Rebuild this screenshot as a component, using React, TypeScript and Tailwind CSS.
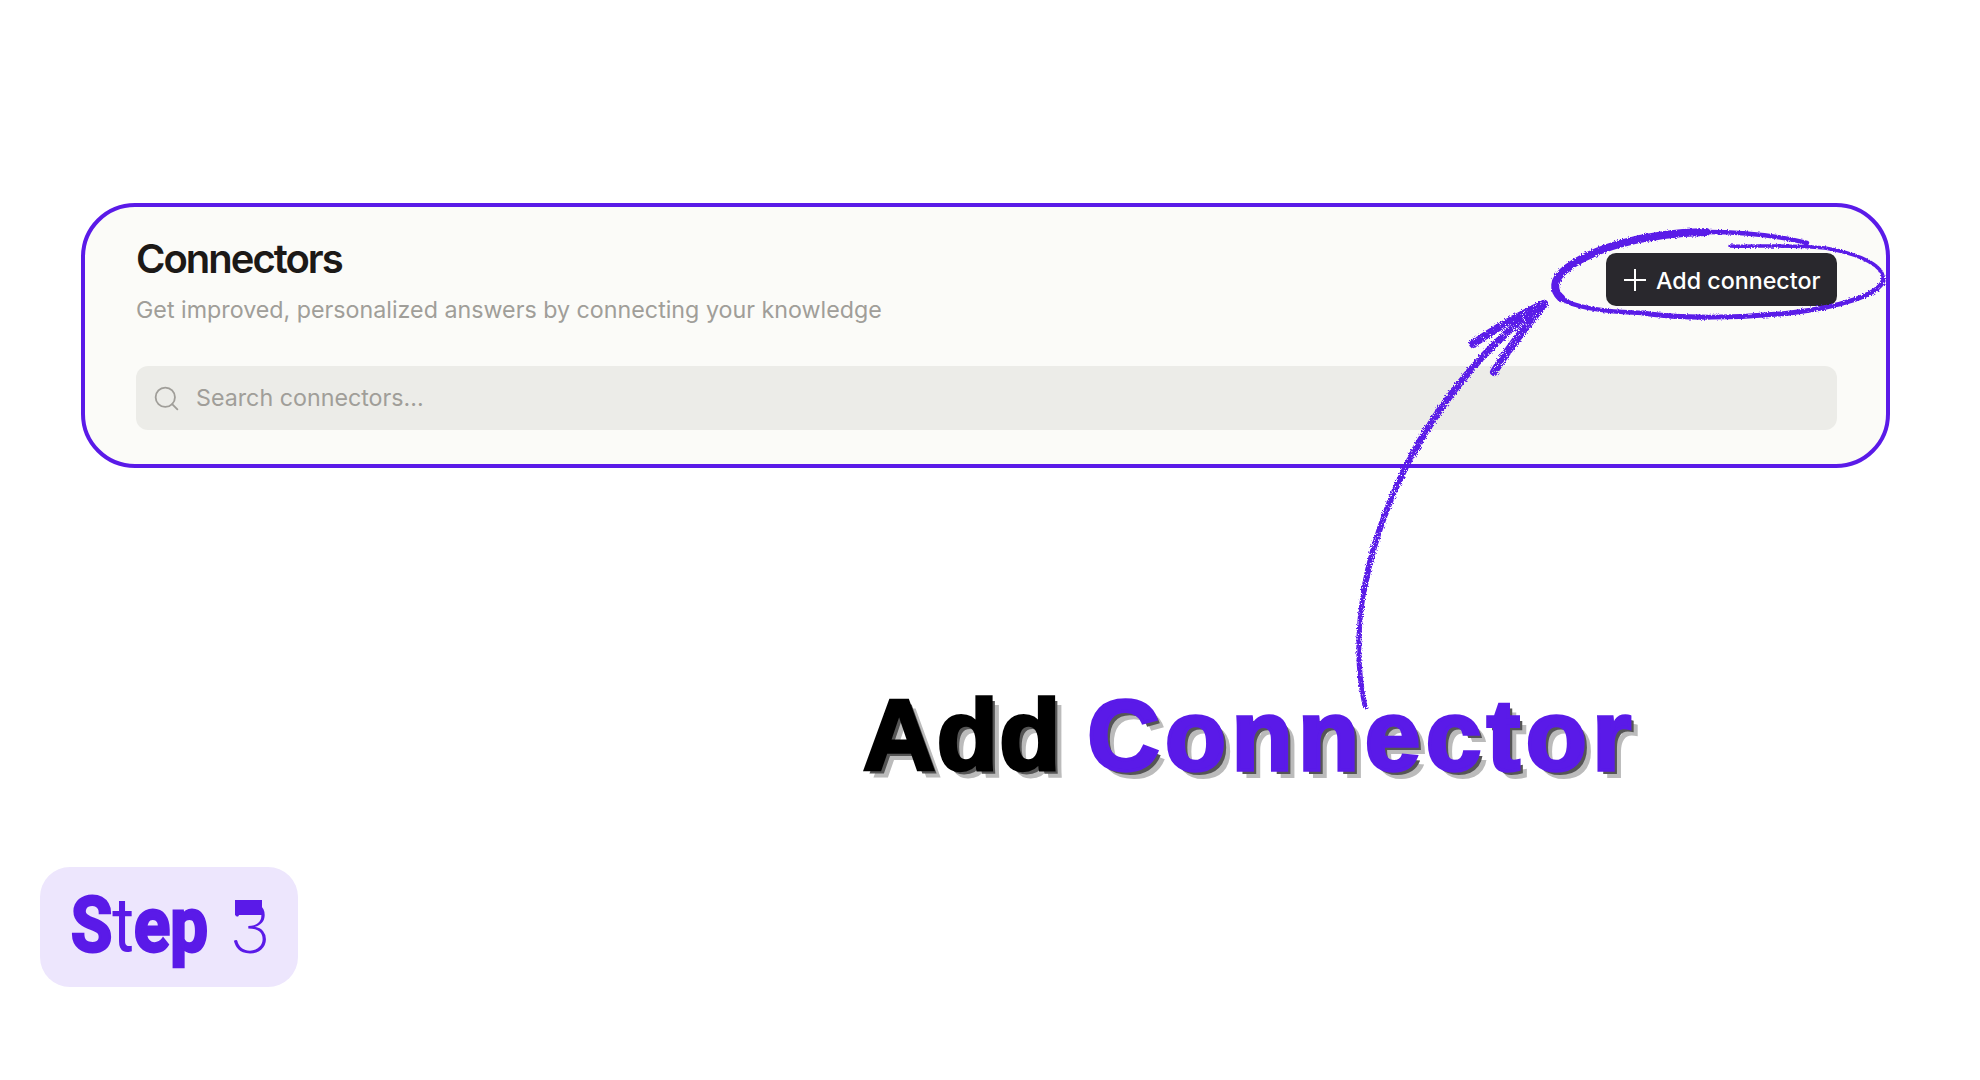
import { Search } from "lucide-react";

const inter = "font-['Inter',sans-serif]";

function Scribbles() {
    return (
        <svg className="absolute inset-0 pointer-events-none" width="1980" height="1080" viewBox="0 0 1980 1080" fill="none">
            <defs>
                <filter id="rough" x="-10%" y="-10%" width="120%" height="120%">
                    <feTurbulence type="fractalNoise" baseFrequency="0.7" numOctaves="2" seed="4" result="noise" />
                    <feDisplacementMap in="SourceGraphic" in2="noise" scale="3.5" />
                </filter>
                <filter id="chalk" x="-10%" y="-10%" width="120%" height="120%">
                    <feTurbulence type="fractalNoise" baseFrequency="0.7" numOctaves="2" seed="4" result="noise" />
                    <feDisplacementMap in="SourceGraphic" in2="noise" scale="4" result="moved" />
                    <feTurbulence type="fractalNoise" baseFrequency="1.1" numOctaves="1" seed="9" />
                    <feColorMatrix type="matrix" values="0 0 0 0 0  0 0 0 0 0  0 0 0 0 0  0 0 0 -9 6.6" result="holes" />
                    <feComposite in="moved" in2="holes" operator="in" />
                </filter>
            </defs>
            {/* circle round the button */}
            <g filter="url(#rough)" stroke="#5a1ae8" strokeLinecap="round">
                <path d="M1807 243C1780 236 1745 232 1706 232" strokeWidth="4.5" />
                <path d="M1706 232C1640 233 1590 250 1566 269" strokeWidth="8" />
                <path d="M1566 269C1552 280 1553 291 1561 298" strokeWidth="8" />
                <path d="M1561 298C1575 309 1610 312 1643 313" strokeWidth="4.5" />
                <path d="M1643 313C1680 319 1740 318 1790 313C1840 307 1878 295 1883 281" strokeWidth="5" />
                <path d="M1883 281C1886 266 1860 254 1825 248C1790 244 1755 247 1730 246" strokeWidth="3.5" />
            </g>
            {/* arrow */}
            <g filter="url(#chalk)" stroke="#5a1ae8" strokeLinecap="round">
                <path d="M1365 706C1357 670 1357 630 1364 590" strokeWidth="5" />
                <path d="M1364 590C1372 545 1388 500 1412 455" strokeWidth="6" />
                <path d="M1412 455C1445 395 1490 340 1544 304" strokeWidth="7" />
                <path d="M1544 304C1520 315 1495 328 1473 344" strokeWidth="8" />
                <path d="M1544 304C1530 322 1510 345 1494 372" strokeWidth="8" />
            </g>
        </svg>
    );
}

export default function App() {
    return (
        <div className="relative w-[1980px] h-[1080px] bg-white overflow-hidden flex flex-col">
            {/* Card */}
            <div className={`${inter} mt-[203px] ml-[81px] w-[1809px] h-[265px] rounded-[54px] border-4 border-[#5a1ae8] bg-[#fbfbf8] pl-[51px] pr-[49px] pt-[28px]`}>
                <div className="flex justify-between">
                    <div>
                        <h1 className="text-[40px] leading-[48px] font-semibold tracking-[-2px] text-[#1c1917]">Connectors</h1>
                        <p className="mt-[13px] text-[23.25px] leading-[28px] text-[#a09e99]">Get improved, personalized answers by connecting your knowledge</p>
                    </div>
                    <button className="mt-[18px] w-[231px] h-[53px] rounded-[10px] bg-[#29282d] text-white flex items-center pl-[17px] gap-[9px] text-[23.25px] font-medium">
                        <svg width="24" height="24" viewBox="0 0 24 24" fill="none" stroke="currentColor" strokeWidth="2">
                            <path d="M12 1v22M1 12h22" />
                        </svg>
                        <span className="pt-[3px]">Add connector</span>
                    </button>
                </div>
                <div className="mt-[42px] h-[64px] rounded-[12px] bg-[#ecece8] flex items-center pl-[16px] gap-[15px] text-[23.25px] text-[#a09e99]">
                    <Search size={29} strokeWidth={1.5} />
                    Search connectors...
                </div>
            </div>

            {/* Heading */}
            <h2 className="mt-[217px] ml-[863px] text-[100px] leading-[100px] font-bold whitespace-nowrap font-['Liberation_Sans',sans-serif] [text-shadow:4px_4px_0_#555,8px_8px_0_#bbb]">
                <span className="text-black tracking-[1.5px] [-webkit-text-stroke:3.5px_#000]">Add </span>
                <span className="-ml-[4px] text-[#5a1ae8] tracking-[5.5px] [-webkit-text-stroke:3.5px_#5a1ae8]">Connector</span>
            </h2>

            {/* Step badge */}
            <div className="relative font-['Roboto',sans-serif] mt-[82px] ml-[40px] w-[258px] h-[120px] rounded-[30px] bg-[#ede6fd] text-[#5a1ae8] text-[76px] leading-none flex items-center pl-[31px]">
                <span className="inline-block origin-left scale-x-[0.88] -translate-y-[2px] whitespace-nowrap">
                    <span className="font-bold [-webkit-text-stroke:3px_#5a1ae8]">S</span>
                    <span className="font-normal">t</span>
                    <span className="font-bold [-webkit-text-stroke:3px_#5a1ae8]">ep</span>
                </span>
                <span className="absolute left-[190px] top-[24px] font-light font-['Lato',sans-serif] text-[70px]">3</span>
                <span className="absolute left-[195px] top-[33px] w-[27px] h-[15px] bg-[#5a1ae8]" />
            </div>

            <Scribbles />
        </div>
    );
}
